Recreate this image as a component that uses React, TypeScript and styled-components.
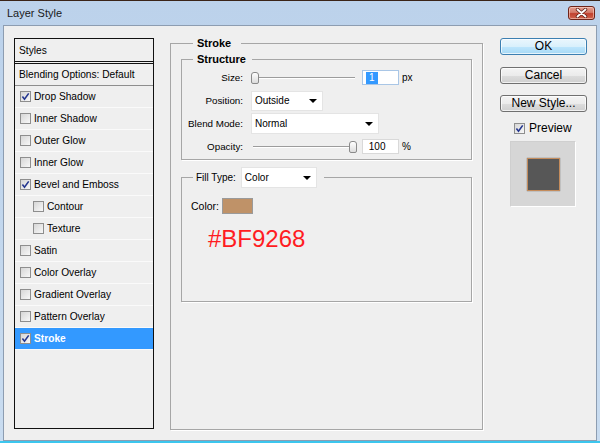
import React from 'react';
import styled, { createGlobalStyle } from 'styled-components';

const Global = createGlobalStyle`
  html, body { margin: 0; padding: 0; background: #efefef; }
  body { font-family: "Liberation Sans", Arial, sans-serif; color: #000; }
  * { box-sizing: border-box; }
`;

const Window = styled.div`
  width: 600px;
  height: 443px;
  display: flex;
  flex-direction: column;
  background: linear-gradient(#bcd2eb, #c9dcf0);
  border-top: 1px solid #3a2418;
  border-bottom: 2px solid #3cc6ee;
  overflow: hidden;
`;

const TitleBar = styled.div`
  height: 24px;
  flex: none;
  display: flex;
  align-items: center;
  justify-content: space-between;
  padding: 0 5px 0 7px;
`;

const Title = styled.span`
  font-size: 11px;
  color: #1a1a1a;
`;

const CloseButton = styled.div`
  width: 27px;
  height: 14px;
  border: 1px solid #6f2419;
  border-radius: 3px;
  background: linear-gradient(#e4a092 0%, #d47a69 45%, #c1412f 55%, #d0634d 100%);
  box-shadow: inset 0 0 0 1px rgba(255, 220, 210, 0.55);
  display: flex;
  align-items: center;
  justify-content: center;
`;

const Client = styled.div`
  flex: 1;
  margin: 0 3px;
  border: 1px solid #8d9db1;
  background: #efefef;
  display: flex;
  align-items: stretch;
  padding: 10px 9px 10px 10px;
`;

const StyleList = styled.div`
  width: 140px;
  flex: none;
  margin: 2px 0 1px 0;
  border: 1px solid #111;
  display: flex;
  flex-direction: column;
  font-size: 10.2px;
`;

const ListHeader = styled.div`
  height: 25px;
  border-bottom: 3px double #111;
  display: flex;
  align-items: center;
  padding-left: 4px;
`;

const BlendRow = styled.div`
  height: 22px;
  border-bottom: 1px solid #8e8e8e;
  display: flex;
  align-items: center;
  padding-left: 4px;
`;

const Row = styled.div<{ $indent?: boolean; $active?: boolean }>`
  height: 22px;
  border-bottom: 1px solid #fafafa;
  display: flex;
  align-items: center;
  gap: 3px;
  padding-left: ${(p) => (p.$indent ? 18 : 5)}px;
  background: ${(p) => (p.$active ? '#3399ff' : 'transparent')};
  color: ${(p) => (p.$active ? '#fff' : '#000')};
  font-weight: ${(p) => (p.$active ? 'bold' : 'normal')};
`;

const Box = styled.span`
  width: 11px;
  height: 11px;
  flex: none;
  border: 1px solid #8e8e8e;
  background: linear-gradient(135deg, #d6d6d6, #f8f8f8);
  display: inline-flex;
  align-items: center;
  justify-content: center;
`;

const Check = ({ checked }: { checked?: boolean }) => (
  <Box>
    {checked && (
      <svg width="9" height="9" viewBox="0 0 9 9">
        <path d="M1.4 4.6 L3.5 7.2 L7.7 1.4" fill="none" stroke="#24368f" strokeWidth="1.6" />
      </svg>
    )}
  </Box>
);

const Middle = styled.fieldset`
  margin: 0 17px 0 16px;
  padding: 0 10px 0 10px;
  min-width: 0;
  width: 313px;
  flex: none;
  border: 1px solid #a6a6a6;
  box-shadow: 1px 1px 0 #fff;
  display: flex;
  flex-direction: column;
`;

const Legend = styled.legend<{ $ml: number; $pl: number; $pr: number }>`
  margin-left: ${(p) => p.$ml}px;
  padding: 0 ${(p) => p.$pr}px 0 ${(p) => p.$pl}px;
  font-size: 11px;
  font-weight: bold;
  line-height: 14px;
`;

const Group = styled.fieldset<{ $mt: number }>`
  margin: ${(p) => p.$mt}px 0 0 0;
  padding: 0;
  min-width: 0;
  border: 1px solid #a6a6a6;
  box-shadow: 1px 1px 0 #fff;
`;

const Grid = styled.div`
  display: grid;
  grid-template-columns: 61px auto;
  column-gap: 8px;
  row-gap: 2px;
  grid-auto-rows: 21px;
  padding: 1px 0 2px 0;
  font-size: 9.8px;
`;

const Label = styled.span`
  display: flex;
  align-items: center;
  justify-content: flex-end;
`;

const Control = styled.div`
  display: flex;
  align-items: center;
`;

const Slider = styled.div`
  position: relative;
  width: 106px;
  height: 12px;
  flex: none;
  &::before {
    content: '';
    position: absolute;
    left: 2px;
    right: 2px;
    top: 5px;
    height: 1px;
    background: #9c9c9c;
    box-shadow: 0 1px 0 #fff;
  }
`;

const Thumb = styled.span<{ $end?: boolean }>`
  position: absolute;
  top: 0;
  ${(p) => (p.$end ? 'right: 0;' : 'left: 0;')}
  width: 8px;
  height: 12px;
  border: 1px solid #8a8a8a;
  border-radius: 3px 3px 2px 2px;
  background: linear-gradient(#ffffff, #dcdcdc);
`;

const NumInput = styled.div<{ $focus?: boolean }>`
  width: 37px;
  height: 15px;
  margin-left: 5px;
  background: #fff;
  border: 1px solid ${(p) => (p.$focus ? '#a9c6e6' : '#d9d9d9')};
  display: flex;
  align-items: center;
  padding-left: 3px;
  font-size: 10px;
`;

const Selected = styled.span`
  background: #3399ff;
  color: #fff;
  padding: 0 3px;
  line-height: 12px;
`;

const Unit = styled.span`
  margin-left: 3px;
  font-size: 10px;
`;

const Select = styled.div<{ $w: number; $h: number }>`
  width: ${(p) => p.$w}px;
  height: ${(p) => p.$h}px;
  background: #fff;
  border: 1px solid #e4e4e4;
  display: flex;
  align-items: center;
  justify-content: space-between;
  padding: 0 5px 0 3px;
  font-size: 10px;
  font-weight: normal;
`;

const Caret = styled.span`
  width: 0;
  height: 0;
  border-left: 4px solid transparent;
  border-right: 4px solid transparent;
  border-top: 4px solid #000;
`;

const FillLegend = styled.legend`
  margin-left: 11px;
  padding: 0 7px 0 3px;
  display: flex;
  align-items: center;
  gap: 5px;
  font-size: 10px;
`;

const FillBody = styled.div`
  height: 113px;
  padding: 10px 0 0 9px;
`;

const ColorRow = styled.div`
  display: flex;
  align-items: center;
  gap: 3px;
  height: 16px;
  font-size: 10.5px;
`;

const Swatch = styled.span`
  width: 31px;
  height: 16px;
  background: #bf9268;
  border: 1px solid #9a9a9a;
`;

const Hex = styled.div`
  margin: 11px 0 0 17px;
  font-size: 24px;
  line-height: 28px;
  color: #ff1c22;
`;

const Side = styled.div`
  width: 87px;
  flex: none;
  display: flex;
  flex-direction: column;
  padding-top: 2px;
`;

const Button = styled.button<{ $default?: boolean; $mb: number }>`
  height: 17px;
  width: 100%;
  margin: 0 0 ${(p) => p.$mb}px 0;
  padding: 0;
  font: 12px "Liberation Sans", Arial, sans-serif;
  line-height: 15px;
  color: #000;
  border: 1px solid ${(p) => (p.$default ? '#3c7fb1' : '#707070')};
  border-radius: 3px;
  background: ${(p) =>
    p.$default
      ? 'linear-gradient(#eaf6fd 0%, #d9f0fc 50%, #bee6fd 51%, #a7d9f5 100%)'
      : 'linear-gradient(#f4f4f4 0%, #ebebeb 50%, #dddddd 51%, #cfcfcf 100%)'};
  box-shadow: inset 0 0 0 1px rgba(255, 255, 255, 0.7);
`;

const PreviewRow = styled.div`
  height: 14px;
  margin-top: -2px;
  padding-left: 14px;
  display: flex;
  align-items: center;
  gap: 4px;
  font-size: 12px;
`;

const PreviewBox = styled.div`
  width: 66px;
  height: 66px;
  margin: 6px 0 0 10px;
  background: #d6d6d6;
  border: 1px solid;
  border-color: #cfcfcf #ffffff #ffffff #cfcfcf;
  display: flex;
  align-items: center;
  justify-content: center;
`;

const PreviewSquare = styled.div`
  width: 33px;
  height: 33px;
  background: #575757;
  border: 1px solid #c48c5c;
  box-shadow: 0 0 1px rgba(0, 0, 0, 0.6);
`;

const styleItems: { label: string; checked?: boolean; indent?: boolean; active?: boolean }[] = [
  { label: 'Drop Shadow', checked: true },
  { label: 'Inner Shadow' },
  { label: 'Outer Glow' },
  { label: 'Inner Glow' },
  { label: 'Bevel and Emboss', checked: true },
  { label: 'Contour', indent: true },
  { label: 'Texture', indent: true },
  { label: 'Satin' },
  { label: 'Color Overlay' },
  { label: 'Gradient Overlay' },
  { label: 'Pattern Overlay' },
  { label: 'Stroke', checked: true, active: true },
];

export default function App() {
  return (
    <>
      <Global />
      <Window>
        <TitleBar>
          <Title>Layer Style</Title>
          <CloseButton>
            <svg width="13" height="10" viewBox="0 0 13 10">
              <path d="M2.5 1.5 L10.5 8.5 M10.5 1.5 L2.5 8.5" stroke="#5a1a12" strokeWidth="3.4" strokeLinecap="round" />
              <path d="M2.5 1.5 L10.5 8.5 M10.5 1.5 L2.5 8.5" stroke="#fff" strokeWidth="1.9" strokeLinecap="round" />
            </svg>
          </CloseButton>
        </TitleBar>
        <Client>
          <StyleList>
            <ListHeader>Styles</ListHeader>
            <BlendRow>Blending Options: Default</BlendRow>
            {styleItems.map((it) => (
              <Row key={it.label} $indent={it.indent} $active={it.active}>
                <Check checked={it.checked} />
                <span>{it.label}</span>
              </Row>
            ))}
          </StyleList>

          <Middle>
            <Legend $ml={12} $pl={4} $pr={10}>Stroke</Legend>
            <Group $mt={2}>
              <Legend $ml={11} $pl={4} $pr={6}>Structure</Legend>
              <Grid>
                <Label>Size:</Label>
                <Control>
                  <Slider>
                    <Thumb />
                  </Slider>
                  <NumInput $focus>
                    <Selected>1</Selected>
                  </NumInput>
                  <Unit>px</Unit>
                </Control>
                <Label>Position:</Label>
                <Control>
                  <Select $w={72} $h={20}>
                    <span>Outside</span>
                    <Caret />
                  </Select>
                </Control>
                <Label>Blend Mode:</Label>
                <Control>
                  <Select $w={128} $h={21}>
                    <span>Normal</span>
                    <Caret />
                  </Select>
                </Control>
                <Label>Opacity:</Label>
                <Control>
                  <Slider>
                    <Thumb $end />
                  </Slider>
                  <NumInput>
                    <span>&nbsp;100</span>
                  </NumInput>
                  <Unit>%</Unit>
                </Control>
              </Grid>
            </Group>
            <Group $mt={7}>
              <FillLegend>
                <span>Fill Type:</span>
                <Select $w={76} $h={21}>
                  <span>Color</span>
                  <Caret />
                </Select>
              </FillLegend>
              <FillBody>
                <ColorRow>
                  <span>Color:</span>
                  <Swatch />
                </ColorRow>
                <Hex>#BF9268</Hex>
              </FillBody>
            </Group>
          </Middle>

          <Side>
            <Button $default $mb={12}>OK</Button>
            <Button $mb={11}>Cancel</Button>
            <Button $mb={11}>New Style...</Button>
            <PreviewRow>
              <Check checked />
              <span>Preview</span>
            </PreviewRow>
            <PreviewBox>
              <PreviewSquare />
            </PreviewBox>
          </Side>
        </Client>
      </Window>
    </>
  );
}
